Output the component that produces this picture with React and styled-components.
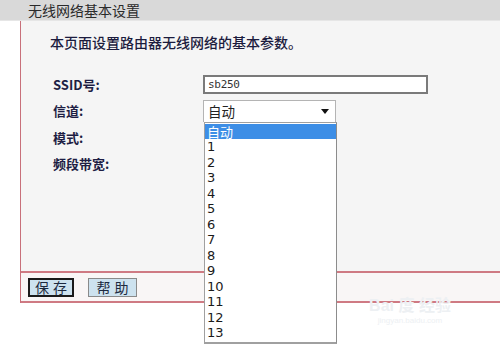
import React from 'react';
import styled, { createGlobalStyle } from 'styled-components';

const GlobalStyle = createGlobalStyle`
  html, body {
    margin: 0;
    padding: 0;
    background: #ffffff;
  }
  body {
    font-family: "Noto Sans CJK SC", "Liberation Sans", sans-serif;
    color: #1e1e38;
  }
`;

const Page = styled.div`
  position: relative;
  width: 500px;
  height: 352px;
  overflow: hidden;
  background: #ffffff;
`;

const TitleBar = styled.div`
  height: 21px;
  background: #d9d9d9;
  padding-left: 28px;
  font-size: 14px;
  line-height: 20px;
  color: #2a2a2a;
  border-bottom: 1px solid #e6e6e6;
  box-sizing: border-box;
`;

const Panel = styled.div`
  margin-left: 20px;
  border-left: 1px solid #c8707a;
`;

const Content = styled.div`
  height: 252px;
  background: #f5f5f5;
  border-bottom: 2px solid #cf7a83;
  box-sizing: border-box;
  padding: 13px 0 0 29px;
`;

const Intro = styled.p`
  margin: 0;
  font-size: 14px;
  line-height: 16px;
  color: #1c1c3e;
  font-weight: 500;
`;

const Form = styled.div`
  margin-top: 21px;
  display: flex;
  flex-direction: column;
`;

const Row = styled.div`
  display: grid;
  grid-template-columns: 150px 1fr;
  align-items: center;
  height: 26.5px;
  margin-left: 3px;
  position: relative;
`;

const Label = styled.span`
  font-size: 13px;
  font-weight: 600;
  color: #1e1e44;
`;

const TextInput = styled.div`
  width: 225px;
  height: 19px;
  box-sizing: border-box;
  border: 2px solid #7a7a7a;
  background: #ffffff;
  font-family: "DejaVu Sans Mono", "Liberation Mono", monospace;
  font-size: 11px;
  line-height: 15px;
  padding-left: 3px;
  color: #333;
  letter-spacing: -0.3px;
`;

const SelectBox = styled.div`
  position: relative;
  width: 133px;
  height: 22px;
  box-sizing: border-box;
  border: 1px solid #b4b4b4;
  border-bottom: none;
  background: #ffffff;
  font-size: 13.5px;
  line-height: 20px;
  padding-left: 4px;
  color: #222;
  display: flex;
  align-items: center;
  justify-content: space-between;
  padding-right: 6px;
`;

const Arrow = styled.span`
  width: 0;
  height: 0;
  border-left: 4px solid transparent;
  border-right: 4px solid transparent;
  border-top: 5px solid #111;
`;

const DropList = styled.ul`
  position: absolute;
  top: 100%;
  left: 0;
  z-index: 3;
  width: 133px;
  margin: 0;
  padding: 1px 0 1px;
  list-style: none;
  box-sizing: border-box;
  background: #ffffff;
  border: 1px solid #a0a0a0;
  border-bottom-width: 2px;
  border-right-color: #8c8c8c;
`;

const Option = styled.li`
  height: 15.5px;
  line-height: 15.5px;
  padding-left: 2px;
  font-size: 13px;
  font-family: ${p => (p.$cjk ? '"Noto Sans CJK SC", sans-serif' : '"DejaVu Sans", "Liberation Sans", sans-serif')};
  color: ${p => (p.$active ? '#ffffff' : '#1a1a1a')};
  background: ${p => (p.$active ? '#3d8ee6' : 'transparent')};
`;

const Footer = styled.div`
  height: 30px;
  box-sizing: border-box;
  border-bottom: 2px solid #cf7a83;
  background: #f9f6f6;
  padding: 5px 0 0 7px;
  display: flex;
  gap: 14px;
  align-items: flex-start;
`;

const Button = styled.button`
  height: 19px;
  padding: 0;
  width: ${p => (p.$primary ? '46px' : '49px')};
  box-sizing: border-box;
  border: ${p => (p.$primary ? '2px solid #1a1a1a' : '1px solid #8a8a8a')};
  background: #cde2ef;
  font-family: "Noto Sans CJK SC", sans-serif;
  font-size: 14px;
  line-height: 15px;
  color: #1e2a40;
  letter-spacing: 4px;
  text-indent: 4px;
`;

const Watermark = styled.div`
  position: absolute;
  left: 355px;
  top: 296px;
  width: 110px;
  text-align: center;
  color: #edf0f3;
  font-family: "Liberation Sans", "Noto Sans CJK SC", sans-serif;
  pointer-events: none;
`;

const MarkTitle = styled.div`
  font-size: 16px;
  font-weight: 700;
  line-height: 20px;
`;

const MarkUrl = styled.div`
  font-size: 8px;
  line-height: 10px;
`;

const channels = ['1', '2', '3', '4', '5', '6', '7', '8', '9', '10', '11', '12', '13'];

function App() {
  return (
    <Page>
      <GlobalStyle />
      <TitleBar>无线网络基本设置</TitleBar>
      <Panel>
        <Content>
          <Intro>本页面设置路由器无线网络的基本参数。</Intro>
          <Form>
            <Row>
              <Label>SSID号:</Label>
              <TextInput>sb250</TextInput>
            </Row>
            <Row>
              <Label>信道:</Label>
              <SelectBox>
                <span>自动</span>
                <Arrow />
                <DropList>
                  <Option $active $cjk>自动</Option>
                  {channels.map(c => (
                    <Option key={c}>{c}</Option>
                  ))}
                </DropList>
              </SelectBox>
            </Row>
            <Row>
              <Label>模式:</Label>
            </Row>
            <Row>
              <Label>频段带宽:</Label>
            </Row>
          </Form>
        </Content>
        <Footer>
          <Button $primary>保存</Button>
          <Button>帮助</Button>
        </Footer>
      </Panel>
      <Watermark>
        <MarkTitle>Bai 度 经验</MarkTitle>
        <MarkUrl>jingyan.baidu.com</MarkUrl>
      </Watermark>
    </Page>
  );
}

export default App;
